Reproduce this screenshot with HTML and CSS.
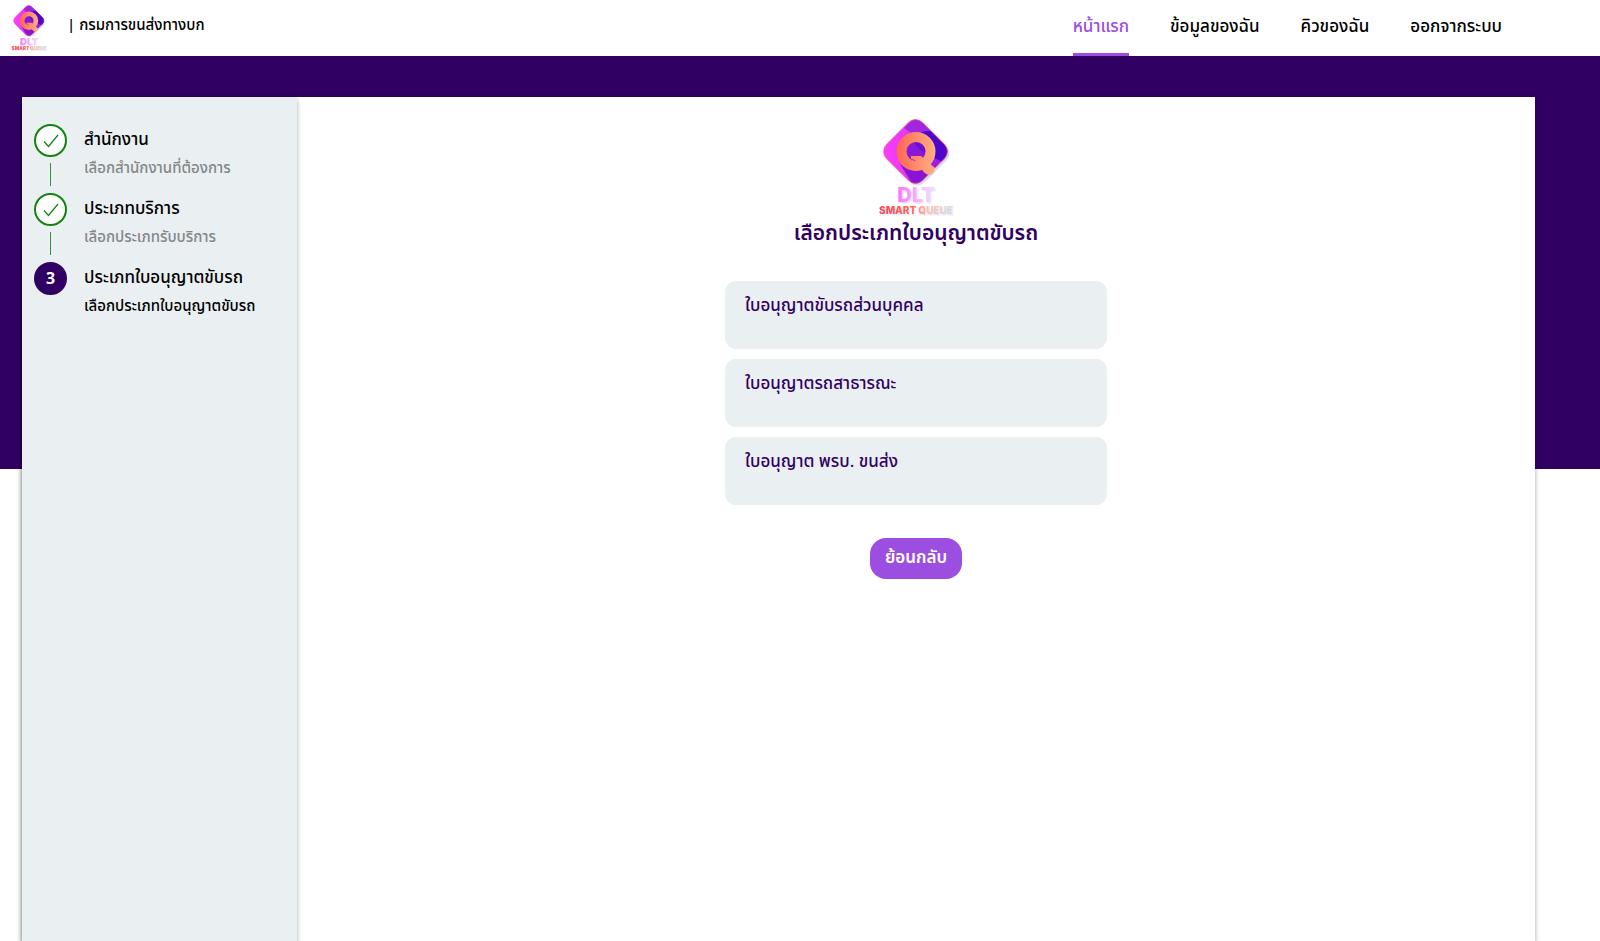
FILE: index.html
```html
<!DOCTYPE html>
<html lang="th">
<head>
<meta charset="utf-8">
<meta name="viewport" content="width=device-width, initial-scale=1">
<title>DLT Smart Queue</title>
<link rel="stylesheet" href="styles.css">
</head>
<body>
<svg class="defs" aria-hidden="true">
  <defs>
    <linearGradient id="tile" x1="0" y1="0" x2="1" y2="0"><stop offset="0" stop-color="#ff40ff"/><stop offset=".35" stop-color="#e838f8"/><stop offset=".6" stop-color="#a81ee4"/><stop offset="1" stop-color="#9418e4"/></linearGradient>
    <linearGradient id="ring" gradientUnits="userSpaceOnUse" x1="18" y1="0" x2="58" y2="0"><stop offset="0" stop-color="#ff6450"/><stop offset="1" stop-color="#ffb184"/></linearGradient>
    <linearGradient id="name" x1="0" y1="0" x2="1" y2="0"><stop offset="0" stop-color="#ff70ff"/><stop offset=".55" stop-color="#f3b4fa"/><stop offset="1" stop-color="#eee4f8"/></linearGradient>
    <linearGradient id="tag" x1="0" y1="0" x2="1" y2="0"><stop offset="0" stop-color="#ff4545"/><stop offset=".45" stop-color="#ff6858"/><stop offset=".65" stop-color="#ffc09a"/><stop offset="1" stop-color="#cfe0ea"/></linearGradient>
    <clipPath id="tile-clip"><rect x="12" y="8" width="51" height="51" rx="10" transform="rotate(45 37.5 33.5)"/></clipPath>
    <symbol id="logo" viewBox="0 0 76 98">
      <rect x="14" y="10" width="51" height="51" rx="10" transform="rotate(45 39.5 35.5)" fill="#bccdf5" opacity=".7"/>
      <g clip-path="url(#tile-clip)">
        <rect width="76" height="70" fill="url(#tile)"/>
        <path d="M37 0 72 22V44C58 44 40 34 32 14L26 10Z" fill="#a026e0"/>
        <path d="M40 16C46 12 56 12 62 16L76 30 66 44C58 42 44 34 40 16Z" fill="#4c06cc"/>
        <path d="M22 46C32 54 46 54 60 46L37 70Z" fill="#8a14d4"/>
        <circle cx="37" cy="33" r="12" fill="#8a18d8"/>
        <path d="M34 20C38 30 44 34 52 36V20Z" fill="#6a10d0"/>
      </g>
      <rect x="12" y="8" width="51" height="51" rx="10" transform="rotate(45 37.5 33.5)" fill="none" stroke="#ff6575" stroke-width="1" opacity=".7"/>
      <circle cx="38" cy="33.5" r="14.5" fill="none" stroke="url(#ring)" stroke-width="10"/>
      <path fill="url(#ring)" d="M33 38H43L57 50Q57 56 51 57Q46 56 43 50L37 42 33 41Z"/>
      <g class="logo-text">
        <text x="38" y="84" class="logo-name" fill="url(#name)">DLT</text>
        <text x="38" y="96" class="logo-tag" fill="url(#tag)">SMART QUEUE</text>
      </g>
    </symbol>
    <symbol id="check" viewBox="0 0 16 14"><path d="M1 7.5 5.5 12.5 15 1" fill="none" stroke="currentColor" stroke-width="1.2"/></symbol>
  </defs>
</svg>
<header class="topbar">
  <a class="brand" href="#">
    <svg class="brand-logo" role="img" aria-label="DLT Smart Queue"><use href="#logo"/></svg>
    <span>| กรมการขนส่งทางบก</span>
  </a>
  <nav class="menu">
    <a class="active" href="#">หน้าแรก</a>
    <a href="#">ข้อมูลของฉัน</a>
    <a href="#">คิวของฉัน</a>
    <a href="#">ออกจากระบบ</a>
  </nav>
</header>
<main class="stage">
  <div class="panel">
    <aside class="sidebar">
      <ol class="steps">
        <li class="step done">
          <span class="mark"><svg class="tick" aria-hidden="true"><use href="#check"/></svg></span>
          <div><h2>สำนักงาน</h2><p>เลือกสำนักงานที่ต้องการ</p></div>
        </li>
        <li class="step done">
          <span class="mark"><svg class="tick" aria-hidden="true"><use href="#check"/></svg></span>
          <div><h2>ประเภทบริการ</h2><p>เลือกประเภทรับบริการ</p></div>
        </li>
        <li class="step current">
          <span class="mark">3</span>
          <div><h2>ประเภทใบอนุญาตขับรถ</h2><p>เลือกประเภทใบอนุญาตขับรถ</p></div>
        </li>
      </ol>
    </aside>
    <section class="content">
      <svg class="hero-logo" role="img" aria-label="DLT Smart Queue"><use href="#logo"/></svg>
      <h1>เลือกประเภทใบอนุญาตขับรถ</h1>
      <div class="choices">
        <button type="button" class="choice">ใบอนุญาตขับรถส่วนบุคคล</button>
        <button type="button" class="choice">ใบอนุญาตรถสาธารณะ</button>
        <button type="button" class="choice">ใบอนุญาต พรบ. ขนส่ง</button>
      </div>
      <button type="button" class="back">ย้อนกลับ</button>
    </section>
  </div>
</main>
</body>
</html>
```
FILE: styles.css
```css
* { box-sizing: border-box; }
body {
  margin: 0;
  min-height: 100vh;
  display: flex;
  flex-direction: column;
  background: #fff;
  color: #000;
  font-family: "Noto Sans Thai", "Noto Sans Thai Looped", "Noto Sans", sans-serif;
}
h1, h2, p, ol { margin: 0; padding: 0; }
a { color: inherit; text-decoration: none; }
button { border: 0; font: inherit; cursor: pointer; }
.defs { position: absolute; width: 0; height: 0; }
.logo-text { text-anchor: middle; filter: drop-shadow(1px 1px 1px rgba(190, 160, 250, .5)); }
.logo-name { font: 800 20px Inter, sans-serif; }
.logo-tag { font: 800 10px Inter, sans-serif; }

.topbar {
  height: 56px;
  display: flex;
  justify-content: space-between;
  padding: 0 98px 0 11px;
}
.brand { display: flex; align-items: center; gap: 20px; font-size: 15px; font-weight: 500; line-height: 20px; }
.brand span { padding-bottom: 5px; }
.brand-logo { width: 36px; height: 48px; }
.menu { display: flex; gap: 41px; font-size: 17px; font-weight: 500; line-height: 24px; }
.menu a { padding-top: 15px; border-bottom: 3px solid transparent; }
.menu .active { color: #9b4ee0; border-color: #9b4ee0; }

.stage {
  flex: 1;
  display: flex;
  padding: 41px 65px 0 22px;
  background: linear-gradient(#300063, #300063) top / 100% 413px no-repeat;
}
.panel { flex: 1; display: flex; background: #fff; box-shadow: 0 2px 5px rgba(0, 0, 0, .35); }
.sidebar { flex: 0 0 275px; padding: 27px 12px; background: #eaeff2; box-shadow: 0 3px 5px rgba(0, 0, 0, .35); }
.steps { list-style: none; display: flex; flex-direction: column; }
.step { position: relative; display: flex; gap: 17px; height: 69px; }
.step.done::after {
  content: "";
  position: absolute;
  left: 16px;
  top: 39px;
  width: 1px;
  height: 23px;
  background: #2c962c;
}
.mark {
  flex: none;
  width: 33px;
  height: 33px;
  display: grid;
  place-items: center;
  border: 2px solid #118311;
  border-radius: 50%;
  background: #fff;
  color: #118311;
}
.current .mark { background: #300063; border-color: #300063; color: #fff; font-size: 16px; font-weight: 700; }
.tick { width: 16px; height: 14px; }
.step h2 { font-size: 17px; font-weight: 500; line-height: 32px; }
.step p { font-size: 15px; font-weight: 500; line-height: 26px; color: #848788; }
.step.current p { color: #000; }

.content { flex: 1; display: flex; flex-direction: column; align-items: center; padding: 21px 24px; color: #300063; }
.hero-logo { width: 76px; height: 98px; }
h1 { font-size: 21px; font-weight: 600; line-height: 36px; }
.choices { width: 100%; max-width: 382px; margin-top: 29px; display: grid; gap: 10px; }
.choice {
  height: 68px;
  display: flex;
  padding: 13px 20px;
  border-radius: 11px;
  background: #eaeff2;
  color: inherit;
  font-size: 17px;
  font-weight: 500;
  line-height: 24px;
  text-align: left;
}
.back {
  margin-top: 33px;
  padding: 8px 15px;
  border-radius: 16px;
  background: #9b4ee0;
  color: #fff;
  font-size: 17px;
  font-weight: 600;
  line-height: 25px;
}
```
